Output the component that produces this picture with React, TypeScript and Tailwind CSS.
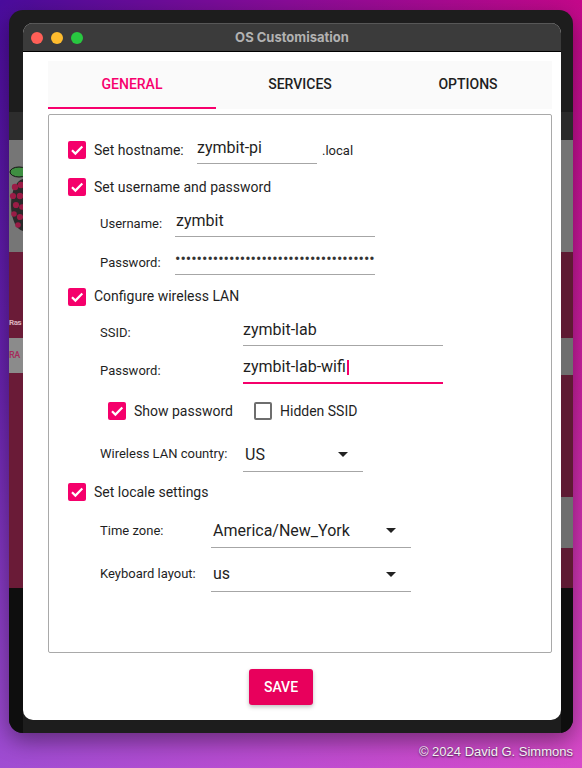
import React from "react";

function CheckBox({ checked }: { checked: boolean }) {
  if (!checked) {
    return <div className="w-[18px] h-[18px] shrink-0 rounded-[2px] border-2 border-[#6e6e6e]" />;
  }
  return (
    <div className="w-[18px] h-[18px] shrink-0 rounded-[2px] bg-[#f5006b] flex items-center justify-center">
      <svg width="18" height="18" viewBox="0 0 18 18">
        <path d="M4 9.3l3.4 3.3L14.3 5.6" fill="none" stroke="white" strokeWidth="2.2" />
      </svg>
    </div>
  );
}

function Arrow() {
  return (
    <svg width="10" height="5" viewBox="0 0 10 5" className="shrink-0">
      <polygon points="0,0 10,0 5,5" fill="#222" />
    </svg>
  );
}

function RaspberryBit() {
  return (
    <svg width="14" height="70" viewBox="0 0 14 70" className="mt-[25px]">
      <ellipse cx="15" cy="40" rx="13" ry="26" fill="#2a2a2a" />
      <circle cx="6" cy="22" r="3.2" fill="#9a1c46" />
      <circle cx="12" cy="20" r="3.2" fill="#9a1c46" />
      <circle cx="4" cy="31" r="3.1" fill="#9a1c46" />
      <circle cx="11" cy="31" r="3.2" fill="#9a1c46" />
      <circle cx="7" cy="40" r="3.1" fill="#9a1c46" />
      <circle cx="13" cy="42" r="2.8" fill="#9a1c46" />
      <circle cx="5" cy="49" r="2.8" fill="#9a1c46" />
      <circle cx="11" cy="52" r="3.1" fill="#9a1c46" />
      <circle cx="9" cy="60" r="2.8" fill="#9a1c46" />
      <ellipse cx="10" cy="7" rx="9" ry="5" fill="#3e8e41" stroke="#111" strokeWidth="1" />
    </svg>
  );
}

function LeftStrip() {
  return (
    <div className="w-[14px] shrink-0 flex flex-col overflow-hidden">
      <div className="h-[102px]" />
      <div className="h-[28px] bg-[#2d2d2d]" />
      <div className="h-[112px] bg-[#767676] overflow-hidden">
        <RaspberryBit />
      </div>
      <div className="h-[336px] bg-[#6a1b37] flex flex-col overflow-hidden">
        <div className="mt-[64px] text-[8px] leading-[14px] font-bold tracking-[-0.5px] text-[#d8aebd] font-[Roboto,sans-serif] whitespace-nowrap">
          Ras
        </div>
        <div className="mt-[8px] h-[35px] bg-[#8b8b8b] flex items-center text-[9px] font-medium tracking-[-0.5px] text-[#a52a5a] font-[Roboto,sans-serif] whitespace-nowrap">
          RA
        </div>
      </div>
      <div className="flex-1 bg-[#0e0e0e]" />
    </div>
  );
}

function RightStrip() {
  return (
    <div className="w-[12px] shrink-0 flex flex-col">
      <div className="h-[102px]" />
      <div className="h-[28px] bg-[#2b2b2b]" />
      <div className="h-[112px] bg-[#747474]" />
      <div className="h-[86px] bg-[#5e1a33]" />
      <div className="h-[37px] bg-[#6e6e6e]" />
      <div className="h-[122px] bg-[#5e1a33]" />
      <div className="h-[51px] bg-[#6e6e6e]" />
      <div className="h-[40px] bg-[#5e1a33]" />
      <div className="flex-1 bg-[#0e0e0e]" />
    </div>
  );
}

function GeneralTab() {
  return (
    <div className="mt-[5px] h-[539px] border border-[#a9a9a9] rounded-[2px] flex flex-col text-[#1f1f1f]">
      {/* hostname */}
      <div className="h-[55px] flex items-start pl-[19px]">
        <div className="mt-[26px]">
          <CheckBox checked />
        </div>
        <div className="mt-[25px] ml-[8px] w-[103px] text-[14px] leading-[20px]">Set hostname:</div>
        <div className="mt-[17px] w-[120px] h-[32px] border-b border-[#a6a6a6] flex items-center text-[16px]">
          zymbit-pi
        </div>
        <div className="mt-[26px] ml-[5px] text-[13px] leading-[20px]">.local</div>
      </div>

      {/* username & password */}
      <div className="h-[35px] flex items-start pl-[19px]">
        <div className="mt-[8px]">
          <CheckBox checked />
        </div>
        <div className="mt-[7px] ml-[8px] text-[14px] leading-[20px]">Set username and password</div>
      </div>
      <div className="h-[38px] flex items-start pl-[51px]">
        <div className="mt-[9px] w-[75px] text-[13px] leading-[20px]">Username:</div>
        <div className="w-[200px] h-[32px] border-b border-[#a6a6a6] flex items-center pl-[1px] text-[16px]">
          zymbit
        </div>
      </div>
      <div className="h-[38px] flex items-start pl-[51px]">
        <div className="mt-[10px] w-[75px] text-[13px] leading-[20px]">Password:</div>
        <div className="w-[200px] h-[32px] border-b border-[#a6a6a6] flex items-center overflow-hidden whitespace-nowrap text-[16px] text-[#333]">
          {"\u2022".repeat(37)}
        </div>
      </div>

      {/* wireless */}
      <div className="h-[33px] flex items-start pl-[19px]">
        <div className="mt-[7px]">
          <CheckBox checked />
        </div>
        <div className="mt-[5px] ml-[8px] text-[14px] leading-[20px]">Configure wireless LAN</div>
      </div>
      <div className="h-[38px] flex items-start pl-[51px]">
        <div className="mt-[9px] w-[143px] text-[13px] leading-[20px]">SSID:</div>
        <div className="w-[200px] h-[32px] border-b border-[#a6a6a6] flex items-center text-[16px]">zymbit-lab</div>
      </div>
      <div className="h-[32px] flex items-start pl-[51px]">
        <div className="mt-[9px] w-[143px] text-[13px] leading-[20px]">Password:</div>
        <div className="w-[200px] h-[32px] border-b-2 border-[#f5006b] flex items-center text-[16px]">
          zymbit-lab-wifi
          <span className="inline-block w-[2px] h-[15px] ml-[1px] bg-[#f5006b]" />
        </div>
      </div>
      <div className="h-[54px] flex items-start pl-[59px]">
        <div className="mt-[18px]">
          <CheckBox checked />
        </div>
        <div className="mt-[17px] ml-[8px] w-[120px] text-[14px] leading-[20px]">Show password</div>
        <div className="mt-[18px]">
          <CheckBox checked={false} />
        </div>
        <div className="mt-[17px] ml-[8px] text-[14px] leading-[20px]">Hidden SSID</div>
      </div>
      <div className="h-[34px] flex items-start pl-[51px]">
        <div className="mt-[6px] w-[143px] text-[13px] leading-[20px]">Wireless LAN country:</div>
        <div className="w-[120px] h-[34px] border-b border-[#a6a6a6] flex items-center justify-between pl-[2px] pr-[15px] text-[16px]">
          <span>US</span>
          <Arrow />
        </div>
      </div>

      {/* locale */}
      <div className="h-[42px] flex items-start pl-[19px]">
        <div className="mt-[11px]">
          <CheckBox checked />
        </div>
        <div className="mt-[10px] ml-[8px] text-[14px] leading-[20px]">Set locale settings</div>
      </div>
      <div className="h-[34px] flex items-start pl-[51px]">
        <div className="mt-[7px] w-[111px] text-[13px] leading-[20px]">Time zone:</div>
        <div className="w-[200px] h-[34px] border-b border-[#a6a6a6] flex items-center justify-between pl-[2px] pr-[15px] text-[16px]">
          <span>America/New_York</span>
          <Arrow />
        </div>
      </div>
      <div className="mt-[9px] h-[35px] flex items-start pl-[51px]">
        <div className="mt-[7px] w-[111px] text-[13px] leading-[20px]">Keyboard layout:</div>
        <div className="w-[200px] h-[35px] border-b border-[#a6a6a6] flex items-center justify-between pl-[2px] pr-[15px] text-[16px]">
          <span>us</span>
          <Arrow />
        </div>
      </div>
    </div>
  );
}

function Dialog() {
  const tabs = ["GENERAL", "SERVICES", "OPTIONS"];
  return (
    <div className="mt-[13px] w-[538px] h-[697px] shrink-0 rounded-[10px] bg-white overflow-hidden flex flex-col">
      <div className="h-[29px] bg-[#3b3b3b] border-t border-[#575757] border-b border-b-black grid grid-cols-[1fr_auto_1fr] items-center">
        <div className="flex items-center gap-[8px] pl-[8px]">
          <div className="w-[12px] h-[12px] rounded-full bg-[#ff5f57]" />
          <div className="w-[12px] h-[12px] rounded-full bg-[#febc2e]" />
          <div className="w-[12px] h-[12px] rounded-full bg-[#28c840]" />
        </div>
        <div className="text-[13px] font-bold text-[#b2b2b2] font-[Inter,sans-serif]">OS Customisation</div>
        <div />
      </div>

      <div className="flex-1 flex flex-col pl-[25px] pr-[9px] pt-[9px] font-[Roboto,sans-serif]">
        <div className="h-[48px] bg-[#fafafa] grid grid-cols-3">
          {tabs.map((t, i) => (
            <div key={t} className="flex flex-col">
              <div
                className={
                  i === 0
                    ? "h-[46px] pt-[1px] flex items-center justify-center text-[14px] font-medium text-[#f7006d]"
                    : "h-[46px] pt-[1px] flex items-center justify-center text-[14px] font-medium text-[#1f1f1f]"
                }
              >
                {t}
              </div>
              <div className={i === 0 ? "h-[2px] bg-[#f7006d]" : "h-[2px]"} />
            </div>
          ))}
        </div>

        <GeneralTab />

        <button className="self-start ml-[201px] mt-[16px] w-[64px] h-[36px] rounded-[3px] bg-[#e8005c] text-white text-[14px] font-medium shadow-[0_2px_4px_rgba(0,0,0,0.25)]">
          SAVE
        </button>
      </div>
    </div>
  );
}

export default function App() {
  return (
    <div className="w-[582px] h-[768px] overflow-hidden pt-[10px] pl-[9px] bg-[linear-gradient(180deg,rgba(230,130,255,0)_0%,rgba(230,130,255,0.2)_50%,rgba(230,130,255,0.55)_100%),linear-gradient(90deg,#4a0c9c_0%,#8a0c98_50%,#c4088a_100%)]">
      <div className="w-[564px] h-[723px] rounded-[14px] bg-[#1d1d1d] overflow-hidden flex shadow-[0_8px_22px_rgba(0,0,0,0.4)]">
        <LeftStrip />
        <Dialog />
        <RightStrip />
      </div>
      <div className="mt-[11px] pr-[9px] flex justify-end text-[13px] leading-[16px] text-[#f2f2f2] font-['Liberation_Sans',Arial,sans-serif] [text-shadow:0_1px_2px_rgba(0,0,0,0.7)]">
        © 2024 David G. Simmons
      </div>
    </div>
  );
}
